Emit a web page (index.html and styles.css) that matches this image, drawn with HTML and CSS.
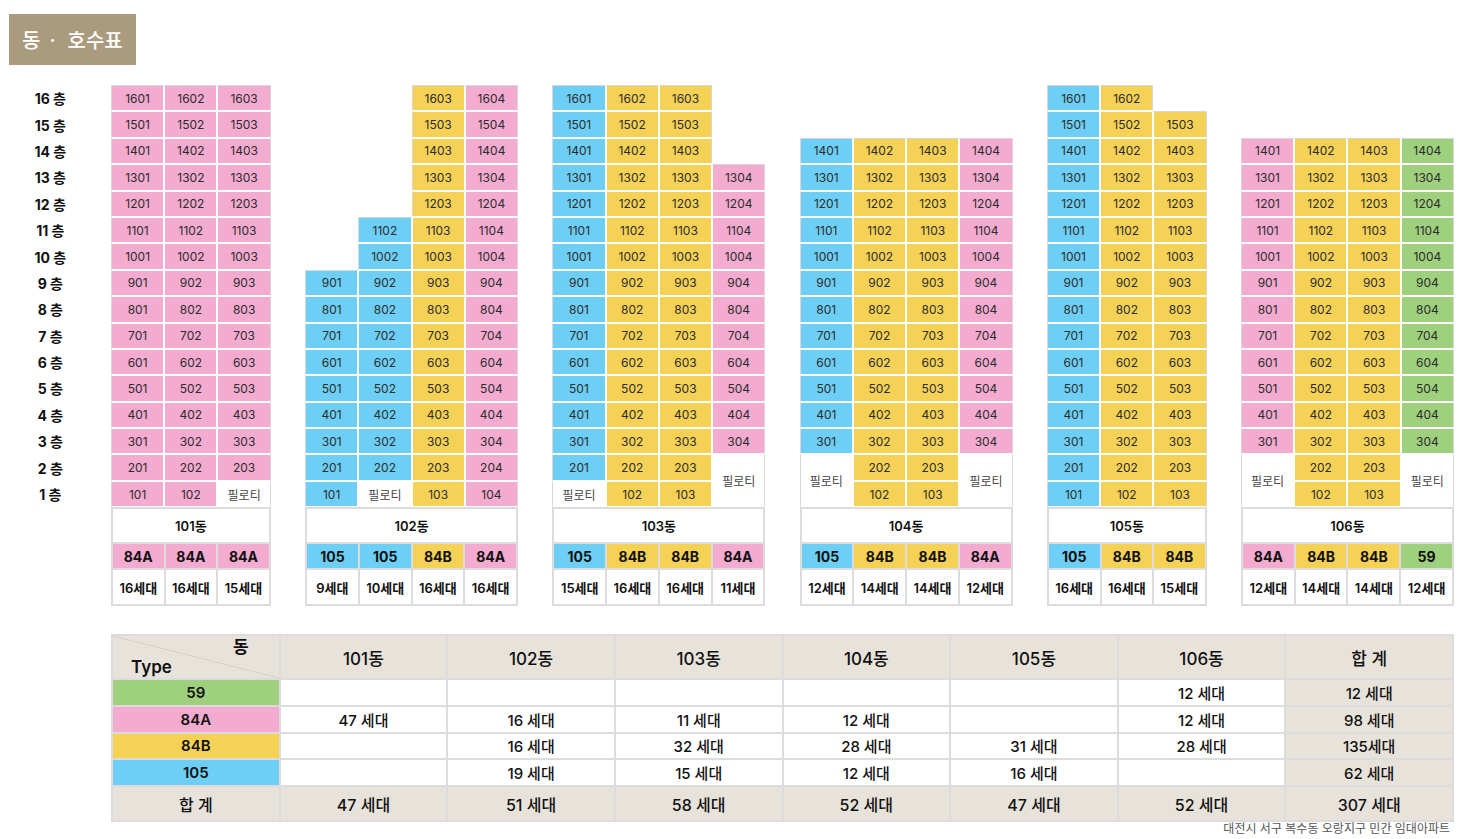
FILE: index.html
```html
<!DOCTYPE html>
<html lang="ko">
<head>
<meta charset="utf-8">
<title>동 · 호수표</title>
<link rel="stylesheet" href="styles.css">
</head>
<body>
<div class="title">동<span class="dot">·</span>호수표</div>

<div class="chart">
  <div class="floors">
    <div>16 층</div><div>15 층</div><div>14 층</div><div>13 층</div><div>12 층</div><div>11 층</div><div>10 층</div><div>9 층</div>
    <div>8 층</div><div>7 층</div><div>6 층</div><div>5 층</div><div>4 층</div><div>3 층</div><div>2 층</div><div>1 층</div>
  </div>

  <!-- 101동 -->
  <div class="bld">
    <div class="body">
      <div class="col">
        <div class="c pk">1601</div><div class="c pk">1501</div><div class="c pk">1401</div><div class="c pk">1301</div><div class="c pk">1201</div><div class="c pk">1101</div><div class="c pk">1001</div><div class="c pk">901</div><div class="c pk">801</div><div class="c pk">701</div><div class="c pk">601</div><div class="c pk">501</div><div class="c pk">401</div><div class="c pk">301</div><div class="c pk">201</div><div class="c pk">101</div>
      </div>
      <div class="col">
        <div class="c pk">1602</div><div class="c pk">1502</div><div class="c pk">1402</div><div class="c pk">1302</div><div class="c pk">1202</div><div class="c pk">1102</div><div class="c pk">1002</div><div class="c pk">902</div><div class="c pk">802</div><div class="c pk">702</div><div class="c pk">602</div><div class="c pk">502</div><div class="c pk">402</div><div class="c pk">302</div><div class="c pk">202</div><div class="c pk">102</div>
      </div>
      <div class="col">
        <div class="c pk">1603</div><div class="c pk">1503</div><div class="c pk">1403</div><div class="c pk">1303</div><div class="c pk">1203</div><div class="c pk">1103</div><div class="c pk">1003</div><div class="c pk">903</div><div class="c pk">803</div><div class="c pk">703</div><div class="c pk">603</div><div class="c pk">503</div><div class="c pk">403</div><div class="c pk">303</div><div class="c pk">203</div><div class="c pl">필로티</div>
      </div>
    </div>
    <div class="foot n3">
      <div class="name">101동</div>
      <div class="type pk">84A</div><div class="type pk">84A</div><div class="type pk">84A</div>
      <div class="cnt">16세대</div><div class="cnt">16세대</div><div class="cnt">15세대</div>
    </div>
  </div>

  <!-- 102동 -->
  <div class="bld">
    <div class="body">
      <div class="col">
        <div class="c bl">901</div><div class="c bl">801</div><div class="c bl">701</div><div class="c bl">601</div><div class="c bl">501</div><div class="c bl">401</div><div class="c bl">301</div><div class="c bl">201</div><div class="c bl">101</div>
      </div>
      <div class="col">
        <div class="c bl el">1102</div><div class="c bl el">1002</div><div class="c bl">902</div><div class="c bl">802</div><div class="c bl">702</div><div class="c bl">602</div><div class="c bl">502</div><div class="c bl">402</div><div class="c bl">302</div><div class="c bl">202</div><div class="c pl">필로티</div>
      </div>
      <div class="col">
        <div class="c ye el">1603</div><div class="c ye el">1503</div><div class="c ye el">1403</div><div class="c ye el">1303</div><div class="c ye el">1203</div><div class="c ye">1103</div><div class="c ye">1003</div><div class="c ye">903</div><div class="c ye">803</div><div class="c ye">703</div><div class="c ye">603</div><div class="c ye">503</div><div class="c ye">403</div><div class="c ye">303</div><div class="c ye">203</div><div class="c ye">103</div>
      </div>
      <div class="col">
        <div class="c pk">1604</div><div class="c pk">1504</div><div class="c pk">1404</div><div class="c pk">1304</div><div class="c pk">1204</div><div class="c pk">1104</div><div class="c pk">1004</div><div class="c pk">904</div><div class="c pk">804</div><div class="c pk">704</div><div class="c pk">604</div><div class="c pk">504</div><div class="c pk">404</div><div class="c pk">304</div><div class="c pk">204</div><div class="c pk">104</div>
      </div>
    </div>
    <div class="foot n4">
      <div class="name">102동</div>
      <div class="type bl">105</div><div class="type bl">105</div><div class="type ye">84B</div><div class="type pk">84A</div>
      <div class="cnt">9세대</div><div class="cnt">10세대</div><div class="cnt">16세대</div><div class="cnt">16세대</div>
    </div>
  </div>

  <!-- 103동 -->
  <div class="bld">
    <div class="body">
      <div class="col">
        <div class="c bl">1601</div><div class="c bl">1501</div><div class="c bl">1401</div><div class="c bl">1301</div><div class="c bl">1201</div><div class="c bl">1101</div><div class="c bl">1001</div><div class="c bl">901</div><div class="c bl">801</div><div class="c bl">701</div><div class="c bl">601</div><div class="c bl">501</div><div class="c bl">401</div><div class="c bl">301</div><div class="c bl">201</div><div class="c pl">필로티</div>
      </div>
      <div class="col">
        <div class="c ye">1602</div><div class="c ye">1502</div><div class="c ye">1402</div><div class="c ye">1302</div><div class="c ye">1202</div><div class="c ye">1102</div><div class="c ye">1002</div><div class="c ye">902</div><div class="c ye">802</div><div class="c ye">702</div><div class="c ye">602</div><div class="c ye">502</div><div class="c ye">402</div><div class="c ye">302</div><div class="c ye">202</div><div class="c ye">102</div>
      </div>
      <div class="col">
        <div class="c ye er">1603</div><div class="c ye er">1503</div><div class="c ye er">1403</div><div class="c ye">1303</div><div class="c ye">1203</div><div class="c ye">1103</div><div class="c ye">1003</div><div class="c ye">903</div><div class="c ye">803</div><div class="c ye">703</div><div class="c ye">603</div><div class="c ye">503</div><div class="c ye">403</div><div class="c ye">303</div><div class="c ye">203</div><div class="c ye">103</div>
      </div>
      <div class="col">
        <div class="c pk">1304</div><div class="c pk">1204</div><div class="c pk">1104</div><div class="c pk">1004</div><div class="c pk">904</div><div class="c pk">804</div><div class="c pk">704</div><div class="c pk">604</div><div class="c pk">504</div><div class="c pk">404</div><div class="c pk">304</div><div class="c pl h2">필로티</div>
      </div>
    </div>
    <div class="foot n4">
      <div class="name">103동</div>
      <div class="type bl">105</div><div class="type ye">84B</div><div class="type ye">84B</div><div class="type pk">84A</div>
      <div class="cnt">15세대</div><div class="cnt">16세대</div><div class="cnt">16세대</div><div class="cnt">11세대</div>
    </div>
  </div>

  <!-- 104동 -->
  <div class="bld">
    <div class="body">
      <div class="col">
        <div class="c bl">1401</div><div class="c bl">1301</div><div class="c bl">1201</div><div class="c bl">1101</div><div class="c bl">1001</div><div class="c bl">901</div><div class="c bl">801</div><div class="c bl">701</div><div class="c bl">601</div><div class="c bl">501</div><div class="c bl">401</div><div class="c bl">301</div><div class="c pl h2">필로티</div>
      </div>
      <div class="col">
        <div class="c ye">1402</div><div class="c ye">1302</div><div class="c ye">1202</div><div class="c ye">1102</div><div class="c ye">1002</div><div class="c ye">902</div><div class="c ye">802</div><div class="c ye">702</div><div class="c ye">602</div><div class="c ye">502</div><div class="c ye">402</div><div class="c ye">302</div><div class="c ye">202</div><div class="c ye">102</div>
      </div>
      <div class="col">
        <div class="c ye">1403</div><div class="c ye">1303</div><div class="c ye">1203</div><div class="c ye">1103</div><div class="c ye">1003</div><div class="c ye">903</div><div class="c ye">803</div><div class="c ye">703</div><div class="c ye">603</div><div class="c ye">503</div><div class="c ye">403</div><div class="c ye">303</div><div class="c ye">203</div><div class="c ye">103</div>
      </div>
      <div class="col">
        <div class="c pk">1404</div><div class="c pk">1304</div><div class="c pk">1204</div><div class="c pk">1104</div><div class="c pk">1004</div><div class="c pk">904</div><div class="c pk">804</div><div class="c pk">704</div><div class="c pk">604</div><div class="c pk">504</div><div class="c pk">404</div><div class="c pk">304</div><div class="c pl h2">필로티</div>
      </div>
    </div>
    <div class="foot n4">
      <div class="name">104동</div>
      <div class="type bl">105</div><div class="type ye">84B</div><div class="type ye">84B</div><div class="type pk">84A</div>
      <div class="cnt">12세대</div><div class="cnt">14세대</div><div class="cnt">14세대</div><div class="cnt">12세대</div>
    </div>
  </div>

  <!-- 105동 -->
  <div class="bld">
    <div class="body">
      <div class="col">
        <div class="c bl">1601</div><div class="c bl">1501</div><div class="c bl">1401</div><div class="c bl">1301</div><div class="c bl">1201</div><div class="c bl">1101</div><div class="c bl">1001</div><div class="c bl">901</div><div class="c bl">801</div><div class="c bl">701</div><div class="c bl">601</div><div class="c bl">501</div><div class="c bl">401</div><div class="c bl">301</div><div class="c bl">201</div><div class="c bl">101</div>
      </div>
      <div class="col">
        <div class="c ye er">1602</div><div class="c ye">1502</div><div class="c ye">1402</div><div class="c ye">1302</div><div class="c ye">1202</div><div class="c ye">1102</div><div class="c ye">1002</div><div class="c ye">902</div><div class="c ye">802</div><div class="c ye">702</div><div class="c ye">602</div><div class="c ye">502</div><div class="c ye">402</div><div class="c ye">302</div><div class="c ye">202</div><div class="c ye">102</div>
      </div>
      <div class="col">
        <div class="c ye">1503</div><div class="c ye">1403</div><div class="c ye">1303</div><div class="c ye">1203</div><div class="c ye">1103</div><div class="c ye">1003</div><div class="c ye">903</div><div class="c ye">803</div><div class="c ye">703</div><div class="c ye">603</div><div class="c ye">503</div><div class="c ye">403</div><div class="c ye">303</div><div class="c ye">203</div><div class="c ye">103</div>
      </div>
    </div>
    <div class="foot n3">
      <div class="name">105동</div>
      <div class="type bl">105</div><div class="type ye">84B</div><div class="type ye">84B</div>
      <div class="cnt">16세대</div><div class="cnt">16세대</div><div class="cnt">15세대</div>
    </div>
  </div>

  <!-- 106동 -->
  <div class="bld">
    <div class="body">
      <div class="col">
        <div class="c pk">1401</div><div class="c pk">1301</div><div class="c pk">1201</div><div class="c pk">1101</div><div class="c pk">1001</div><div class="c pk">901</div><div class="c pk">801</div><div class="c pk">701</div><div class="c pk">601</div><div class="c pk">501</div><div class="c pk">401</div><div class="c pk">301</div><div class="c pl h2">필로티</div>
      </div>
      <div class="col">
        <div class="c ye">1402</div><div class="c ye">1302</div><div class="c ye">1202</div><div class="c ye">1102</div><div class="c ye">1002</div><div class="c ye">902</div><div class="c ye">802</div><div class="c ye">702</div><div class="c ye">602</div><div class="c ye">502</div><div class="c ye">402</div><div class="c ye">302</div><div class="c ye">202</div><div class="c ye">102</div>
      </div>
      <div class="col">
        <div class="c ye">1403</div><div class="c ye">1303</div><div class="c ye">1203</div><div class="c ye">1103</div><div class="c ye">1003</div><div class="c ye">903</div><div class="c ye">803</div><div class="c ye">703</div><div class="c ye">603</div><div class="c ye">503</div><div class="c ye">403</div><div class="c ye">303</div><div class="c ye">203</div><div class="c ye">103</div>
      </div>
      <div class="col">
        <div class="c gn">1404</div><div class="c gn">1304</div><div class="c gn">1204</div><div class="c gn">1104</div><div class="c gn">1004</div><div class="c gn">904</div><div class="c gn">804</div><div class="c gn">704</div><div class="c gn">604</div><div class="c gn">504</div><div class="c gn">404</div><div class="c gn">304</div><div class="c pl h2">필로티</div>
      </div>
    </div>
    <div class="foot n4">
      <div class="name">106동</div>
      <div class="type pk">84A</div><div class="type ye">84B</div><div class="type ye">84B</div><div class="type gn">59</div>
      <div class="cnt">12세대</div><div class="cnt">14세대</div><div class="cnt">14세대</div><div class="cnt">12세대</div>
    </div>
  </div>
</div>

<table class="sum">
  <tr class="hd">
    <th class="diag"><div class="diag-in"><div class="dg-dong">동</div><div class="dg-type">Type</div></div></th>
    <th>101동</th><th>102동</th><th>103동</th><th>104동</th><th>105동</th><th>106동</th><th>합 계</th>
  </tr>
  <tr class="row">
    <th class="gn">59</th><td></td><td></td><td></td><td></td><td></td><td>12 세대</td><td class="tot">12 세대</td>
  </tr>
  <tr class="row">
    <th class="pk">84A</th><td>47 세대</td><td>16 세대</td><td>11 세대</td><td>12 세대</td><td></td><td>12 세대</td><td class="tot">98 세대</td>
  </tr>
  <tr class="row">
    <th class="ye">84B</th><td></td><td>16 세대</td><td>32 세대</td><td>28 세대</td><td>31 세대</td><td>28 세대</td><td class="tot">135세대</td>
  </tr>
  <tr class="row">
    <th class="bl">105</th><td></td><td>19 세대</td><td>15 세대</td><td>12 세대</td><td>16 세대</td><td></td><td class="tot">62 세대</td>
  </tr>
  <tr class="ft">
    <th>합 계</th><td>47 세대</td><td>51 세대</td><td>58 세대</td><td>52 세대</td><td>47 세대</td><td>52 세대</td><td>307 세대</td>
  </tr>
</table>
<div class="caption">대전시 서구 복수동 오랑지구 민간 임대아파트</div>
</body>
</html>
```

FILE: styles.css
```css
html, body {
  margin: 0;
  padding: 0;
  background: #fff;
}
body {
  font-family: "Inter", "Noto Sans CJK KR", sans-serif;
  color: #222;
  width: 1467px;
}

.title {
  margin: 14px 0 0 9px;
  width: 127px;
  height: 51px;
  box-sizing: border-box;
  padding-left: 13px;
  background: #ab9b7e;
  color: #fff;
  font-size: 20px;
  font-weight: 500;
  display: flex;
  align-items: center;
  white-space: nowrap;
}
.title .dot {
  margin: 0 12px 0 9px;
}

/* ---------- building chart ---------- */
.chart {
  display: flex;
  align-items: flex-end;
  gap: 34.3px;
  margin-top: 20px;
}
.floors {
  width: 76.7px;
  box-sizing: border-box;
  padding-left: 24px;
  padding-bottom: 99px;
}
.floors div {
  height: 26.4px;
  display: flex;
  align-items: center;
  justify-content: center;
  font-size: 14px;
  font-weight: 700;
  color: #111;
}

.bld {
  display: flex;
  flex-direction: column;
}
.body {
  display: flex;
  align-items: flex-end;
}
.col {
  width: 53.25px;
  display: flex;
  flex-direction: column;
}
.c {
  height: 26.4px;
  box-sizing: border-box;
  border: 1px solid #fff;
  display: flex;
  align-items: center;
  justify-content: center;
  font-size: 12px;
  color: #2c2c2c;
}
.c.h2 { height: 52.8px; }
.col > .c:first-child { border-top-color: #d7d7d7; }
.col:first-child > .c { border-left-color: #d7d7d7; }
.col:last-child > .c { border-right-color: #d7d7d7; }
.c.el { border-left-color: #d7d7d7; }
.c.er { border-right-color: #d7d7d7; }

.pk { background: #f3abd0; }
.bl { background: #6dcff5; }
.ye { background: #f5d256; }
.gn { background: #9fd07d; }
.pl { background: #fff; color: #444; }

.foot {
  display: grid;
  gap: 2px;
  padding: 2px;
  background: #dcdcdc;
}
.foot.n3 { grid-template-columns: repeat(3, 1fr); }
.foot.n4 { grid-template-columns: repeat(4, 1fr); }
.foot > div {
  display: flex;
  align-items: center;
  justify-content: center;
}
.foot .name {
  grid-column: 1 / -1;
  height: 33px;
  background: #fff;
  font-size: 13px;
  font-weight: 600;
  color: #111;
}
.foot .type {
  height: 24px;
  font-size: 14px;
  font-weight: 700;
  color: #111;
}
.foot .cnt {
  height: 34px;
  background: #fff;
  font-size: 13px;
  font-weight: 600;
  color: #111;
}

/* ---------- summary table ---------- */
.sum {
  margin: 28px 0 0 111px;
  width: 1343px;
  border-collapse: collapse;
  table-layout: fixed;
  border: 2px solid #dcdcdc;
}
.sum th, .sum td {
  border: 2px solid #dcdcdc;
  padding: 0;
  text-align: center;
  font-weight: 600;
  color: #111;
}
.sum .hd th {
  height: 42px;
  background: #e8e3da;
  font-size: 17px;
  font-weight: 500;
}
.sum .row th, .sum .row td {
  height: 24.7px;
  font-size: 15px;
}
.sum .row td { background: #fff; font-weight: 500; }
.sum .row td.tot { background: #e8e3da; }
.sum .ft th, .sum .ft td {
  height: 33px;
  background: #e8e3da;
  font-size: 16px;
  font-weight: 500;
}
.sum th.diag {
  background: #e8e3da linear-gradient(to top right, transparent calc(50% - 0.7px), #cfcac2 50%, transparent calc(50% + 0.7px));
}
.diag-in {
  display: flex;
  flex-direction: column;
  padding: 0 30px 0 18px;
  font-size: 17px;
  font-weight: 600;
  line-height: 20px;
}
.dg-dong { text-align: right; }
.dg-type { text-align: left; }

.caption {
  text-align: right;
  padding-right: 17px;
  font-size: 12px;
  line-height: 14px;
  color: #555;
}
```
